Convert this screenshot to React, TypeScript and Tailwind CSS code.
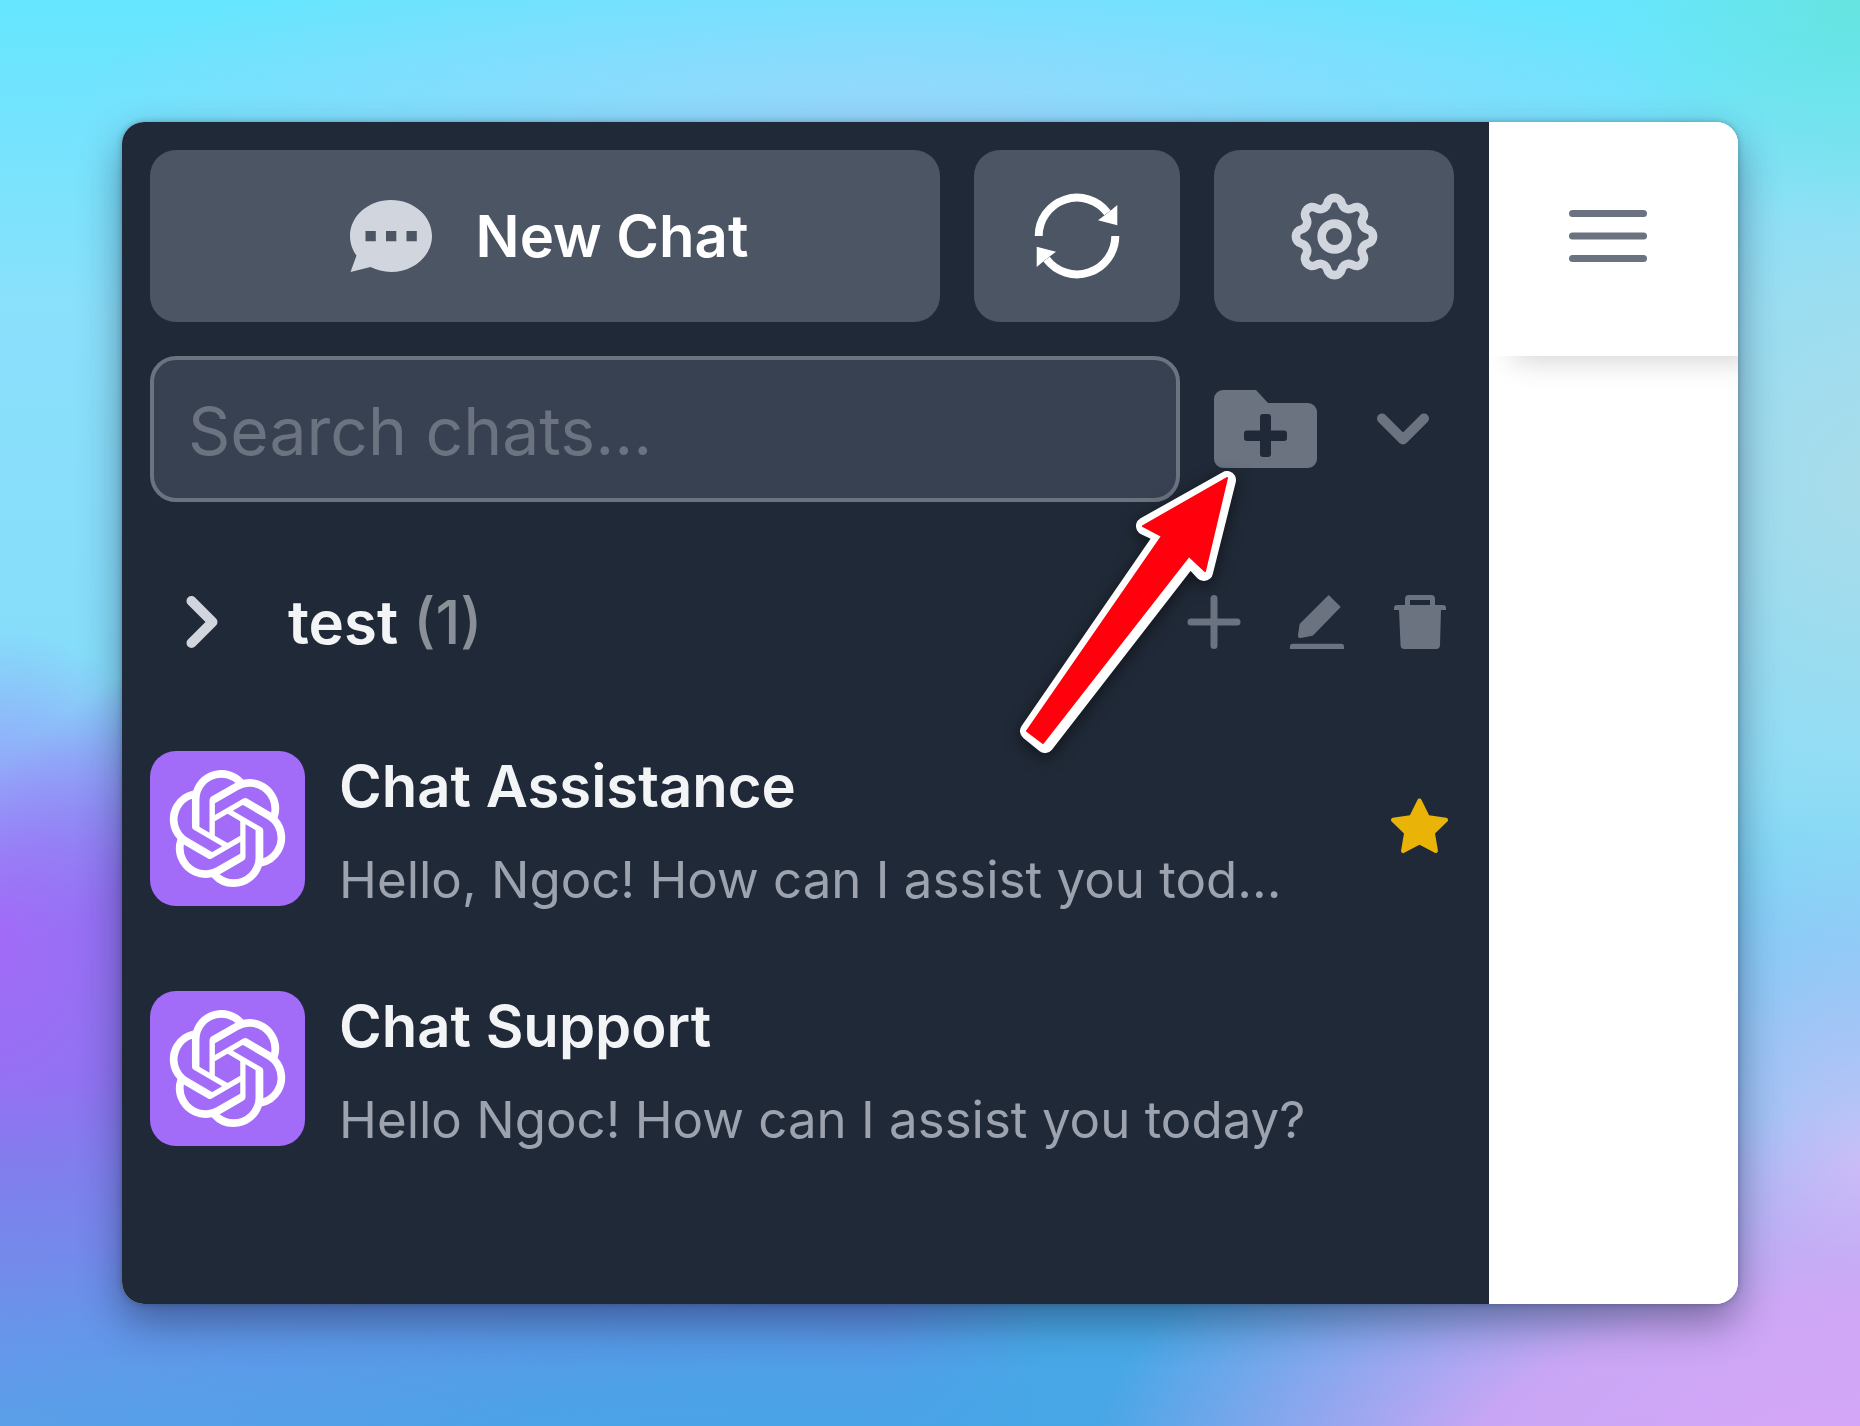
import { AiFillStar } from "react-icons/ai";
import { HiOutlineCog } from "react-icons/hi";
import { SiOpenai } from "react-icons/si";

const chats = [
  {
    id: 1,
    title: "Chat Assistance",
    preview: "Hello, Ngoc! How can I assist you tod...",
    starred: true,
  },
  {
    id: 2,
    title: "Chat Support",
    preview: "Hello Ngoc! How can I assist you today?",
    starred: false,
  },
];

function ChatBubbleIcon() {
  return (
    <svg viewBox="0 0 82 72" className="h-[72px] w-[82px]" fill="currentColor">
      <path
        fillRule="evenodd"
        d="M41 0C63.600 0 82 16.100 82 36S63.600 72 41 72C33.500 72 26.500 70.200 20.500 67.100L0.500 72L6.500 55.500C2.400 50 0 43.300 0 36C0 16.100 18.400 0 41 0ZM15.500 31v10.300h10.300V31ZM36 31v10.300h10.300V31ZM56.500 31v10.300h10.300V31Z"
      />
    </svg>
  );
}

function RefreshIcon() {
  return (
    <svg viewBox="-43 -43 86 86" className="size-[86px]" fill="currentColor">
      <g fill="none" stroke="currentColor" strokeWidth="8">
        <path d="M-38.300 0A38.300 38.300 0 0 1 30.500 -23.200" />
        <path d="M38.300 0A38.300 38.300 0 0 1 -30.500 23.200" />
      </g>
      <path d="M40.300 -31V-10.700L21 -15.700L32 -24Z" />
      <path d="M-40.300 31V10.700L-21 15.700L-32 24Z" />
    </svg>
  );
}

function FolderAddIcon() {
  return (
    <svg viewBox="0 0 103 78" className="h-[78px] w-[103px]" fill="currentColor">
      <path
        fillRule="evenodd"
        d="M9 0H42L54 13H94A9 9 0 0 1 103 22V69A9 9 0 0 1 94 78H9A9 9 0 0 1 0 69V9A9 9 0 0 1 9 0ZM49 24A3 3 0 0 0 46 27V40.500H33A3 3 0 0 0 30 43.500V48A3 3 0 0 0 33 51H46V64A3 3 0 0 0 49 67H54A3 3 0 0 0 57 64V51H70A3 3 0 0 0 73 48V43.500A3 3 0 0 0 70 40.500H57V27A3 3 0 0 0 54 24Z"
      />
    </svg>
  );
}

function ChevronDownIcon() {
  return (
    <svg
      viewBox="0 0 52 32"
      className="h-8 w-[52px]"
      fill="none"
      stroke="currentColor"
      strokeWidth="10"
      strokeLinecap="round"
      strokeLinejoin="round"
    >
      <path d="M5 5.500L26 26.500L47 5.500" />
    </svg>
  );
}

function ChevronRightIcon() {
  return (
    <svg
      viewBox="0 0 32 52"
      className="h-[52px] w-8"
      fill="none"
      stroke="currentColor"
      strokeWidth="10"
      strokeLinecap="round"
      strokeLinejoin="round"
    >
      <path d="M5.500 5L26.500 26L5.500 47" />
    </svg>
  );
}

function PlusIcon() {
  return (
    <svg viewBox="0 0 54 54" className="size-[54px]" fill="currentColor">
      <rect x="23.500" y="0" width="7" height="54" rx="3.500" />
      <rect x="0.500" y="23.500" width="53" height="7" rx="3.500" />
    </svg>
  );
}

function EditIcon() {
  return (
    <svg viewBox="0 0 54 54" className="size-[54px]" fill="currentColor">
      <path d="M38.700 0L50.700 12L23.500 39.900Q22.500 40.800 21.200 41L11 43Q7.500 43.400 8 40L9.500 29.800Q9.600 29 10.300 28.300Z" />
      <path d="M0 54V51.500Q0 48.700 2.800 48.700H51.200Q54 48.700 54 51.500V54Z" />
    </svg>
  );
}

function TrashIcon() {
  return (
    <svg viewBox="0 0 54 54" className="size-[54px]" fill="currentColor">
      <path
        fillRule="evenodd"
        d="M12 10V4A4 4 0 0 1 16 0H38A4 4 0 0 1 42 4V10H50Q53 10 53 12.500V15H48L47 50A4 4 0 0 1 43 54H11.500A4 4 0 0 1 7.500 50L6 15H1V12.500Q1 10 4 10ZM17 5V10H37V5Z"
      />
    </svg>
  );
}

function MenuIcon() {
  return (
    <svg viewBox="0 0 78 54" className="h-[54px] w-[78px]" fill="currentColor">
      <rect x="0" y="1" width="78" height="7" rx="3.500" />
      <rect x="0" y="23.500" width="78" height="7" rx="3.500" />
      <rect x="0" y="46" width="78" height="7" rx="3.500" />
    </svg>
  );
}

function PointerArrow() {
  return (
    <svg
      viewBox="0 0 230 300"
      className="pointer-events-none absolute top-[342px] right-[244px] h-[300px] w-[230px] drop-shadow-[0_4px_8px_rgba(0,0,0,0.5)]"
    >
      <path
        d="M212 16L130 62L149 71L14 267L30 280L175 93L189 108Z"
        fill="#fff"
        stroke="#fff"
        strokeWidth="18"
        strokeLinejoin="round"
      />
      <path
        d="M212 14L128 62L147 72L12 267L28 279L174 92L190 107Z"
        fill="#ff000c"
        stroke="#ff000c"
        strokeWidth="2"
        strokeLinejoin="round"
      />
    </svg>
  );
}

function Sidebar() {
  return (
    <aside className="relative flex min-w-0 flex-1 flex-col bg-[#202937] pt-7 pr-[35px] pb-7 pl-7">
      <div className="flex gap-[34px]">
        <button className="flex h-[172px] flex-1 items-center justify-center gap-11 rounded-[26px] bg-[#4b5563] pl-2 text-[58px] font-semibold text-white">
          <span className="text-[#d1d5dd]">
            <ChatBubbleIcon />
          </span>
          New Chat
        </button>
        <button
          aria-label="Refresh"
          className="flex h-[172px] w-[206px] items-center justify-center rounded-[26px] bg-[#4b5563] text-white"
        >
          <RefreshIcon />
        </button>
        <button
          aria-label="Settings"
          className="flex h-[172px] w-60 items-center justify-center rounded-[26px] bg-[#4b5563] text-[#d1d5dd]"
        >
          <HiOutlineCog className="size-[103px]" />
        </button>
      </div>

      <div className="mt-[34px] flex items-center gap-[34px]">
        <input
          type="text"
          aria-label="Search chats"
          placeholder="Search chats..."
          className="h-[146px] min-w-0 flex-1 rounded-[26px] border-4 border-[#6b7280] bg-[#384151] px-[34px] pt-1 text-[66px] text-white placeholder:text-[#6b7280]"
        />
        <div className="flex w-60 items-center justify-between pr-[25px] text-[#6b7280]">
          <button aria-label="New folder">
            <FolderAddIcon />
          </button>
          <button aria-label="Sort chats">
            <ChevronDownIcon />
          </button>
        </div>
      </div>

      {/* Folder */}
      <div className="mt-[34px] flex h-[172px] items-center pr-[7px] pl-9">
        <button className="flex flex-1 items-center gap-[70px] text-[60px] font-semibold text-[#f3f4f6]">
          <span className="text-[#d1d5dd]">
            <ChevronRightIcon />
          </span>
          <span>
            test <span className="font-medium text-[#8a9098]">(1)</span>
          </span>
        </button>
        <div className="flex gap-[49px] text-[#6b7280]">
          <button aria-label="Add chat to folder">
            <PlusIcon />
          </button>
          <button aria-label="Rename folder">
            <EditIcon />
          </button>
          <button aria-label="Delete folder">
            <TrashIcon />
          </button>
        </div>
      </div>

      {/* Chats */}
      <ul>
        {chats.map((chat) => (
          <li key={chat.id} className="flex h-60 items-center gap-[34px]">
            <div className="flex size-[155px] shrink-0 items-center justify-center rounded-[26px] bg-[#a26cf8] text-white">
              <SiOpenai className="size-[117px]" />
            </div>
            <div className="min-w-0 flex-1 pt-1 whitespace-nowrap">
              <h3 className="text-[58px] leading-[100px] font-semibold text-[#f3f4f6]">
                {chat.title}
              </h3>
              <p className="text-[51px] leading-[88px] text-[#9ca3af]">
                {chat.preview}
              </p>
            </div>
            {chat.starred && (
              <AiFillStar className="size-[69px] shrink-0 text-[#eab308]" />
            )}
          </li>
        ))}
      </ul>

      <PointerArrow />
    </aside>
  );
}

export default function App() {
  return (
    <div className="flex min-h-screen bg-[radial-gradient(ellipse_42%_26%_at_100%_104%,#d9a6fa_0%,#d2a6f6ee_50%,#d2a6f600_100%),radial-gradient(ellipse_60%_22%_at_45%_104%,#46a6e6_0%,#46a6e6dd_35%,#46a6e600_100%),radial-gradient(ellipse_50%_30%_at_0%_106%,#5ca6ea_0%,#6699eacc_40%,#6c96ea00_100%),radial-gradient(ellipse_12%_22%_at_0%_66%,#a26af8_0%,#a26af800_100%),radial-gradient(ellipse_34%_50%_at_22%_92%,#8478ec_0%,#8478ec_75%,#8478ec00_100%),radial-gradient(ellipse_16%_24%_at_100%_82%,#c8c4f8_0%,#c8c4f800_100%),radial-gradient(ellipse_14%_16%_at_100%_0%,#66e4e0_0%,#66e4e000_100%),radial-gradient(ellipse_20%_32%_at_100%_34%,#a9dcea_0%,#a9dcea00_100%),radial-gradient(ellipse_45%_14%_at_48%_9%,#98d6fc_0%,#98d6fc00_100%),linear-gradient(180deg,#66e6ff_0%,#8ae0fb_22%,#84dcfa_55%,#62bdf0_80%,#46a6e6_100%)] p-[122px] font-[Inter,sans-serif]">
      <div className="flex flex-1 overflow-hidden rounded-[22px] bg-white shadow-[0_18px_40px_rgba(20,30,60,0.45),0_0_6px_rgba(20,30,60,0.3)]">
        <Sidebar />
        <main className="w-[249px] overflow-hidden bg-white">
          <header className="flex h-[234px] items-center justify-center bg-white pr-3 pb-1.5 shadow-[20px_8px_28px_-4px_rgba(0,0,0,0.18)]">
            <button aria-label="Open menu" className="text-[#6b7280]">
              <MenuIcon />
            </button>
          </header>
        </main>
      </div>
    </div>
  );
}
